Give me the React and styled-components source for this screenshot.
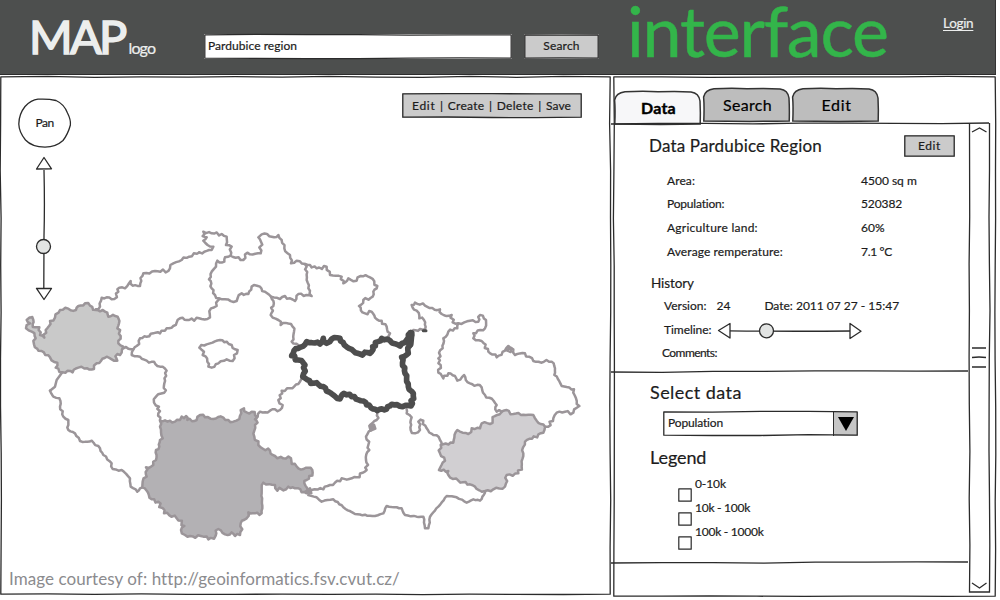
import React from 'react';
import styled, { createGlobalStyle } from 'styled-components';

const INK = '#2b2b2b';

const GlobalStyle = createGlobalStyle`
  * { box-sizing: border-box; }
  body { margin: 0; background: #fff; color: #1c1c1c; font-family: Lato, "Open Sans", sans-serif; }
`;

/* ---------- hand-drawn lines ---------- */

function noise(i, seed) {
  const v = Math.sin(i * 12.9898 + seed * 78.233) * 43758.5453;
  return (v - Math.floor(v)) * 2 - 1;
}

function handLine(x1, y1, x2, y2, seed, amp = 0.5) {
  const len = Math.hypot(x2 - x1, y2 - y1);
  const n = Math.max(1, Math.round(len / 48));
  const nx = -(y2 - y1) / len;
  const ny = (x2 - x1) / len;
  let d = '';
  for (let i = 1; i <= n; i += 1) {
    const t = i / n;
    const o = i === n ? 0 : noise(i, seed) * amp;
    d += `L${(x1 + (x2 - x1) * t + nx * o).toFixed(1)} ${(y1 + (y2 - y1) * t + ny * o).toFixed(1)}`;
  }
  return d;
}

function boxPath(w, h, seed, amp) {
  const a = 0.8;
  return `M${a} ${a}${handLine(a, a, w - a, a, seed, amp)}${handLine(w - a, a, w - a, h - a, seed + 1, amp)}${handLine(w - a, h - a, a, h - a, seed + 2, amp)}${handLine(a, h - a, a, a, seed + 3, amp)}Z`;
}

const Outline = styled.svg`
  position: absolute;
  inset: 0;
  overflow: visible;
  pointer-events: none;
  fill: none;
  stroke: ${INK};
  stroke-width: ${(p) => p.$weight || 1.3};
  stroke-linejoin: round;
`;

function Frame({ w, h, seed = 1, weight, amp }) {
  return (
    <Outline width={w} height={h} $weight={weight}>
      <path d={boxPath(w, h, seed, amp)} />
    </Outline>
  );
}

const Rule = styled.svg`
  display: block;
  flex: none;
  overflow: visible;
  margin-left: -2px;
  fill: none;
  stroke: ${INK};
  stroke-width: 1.3;
`;

/* ---------- text ---------- */

const Text = styled.span`
  font-size: ${(p) => p.$size || 12}px;
  letter-spacing: ${(p) => p.$track || 0}px;
  font-weight: ${(p) => (p.$bold ? 700 : 400)};
  line-height: 1.2;
  white-space: nowrap;
  -webkit-text-stroke: ${(p) => (p.$bold ? 0.4 : 0.2)}px currentColor;
`;

/* ---------- header ---------- */

const Page = styled.div`
  width: 1000px;
  height: 600px;
  display: flex;
  flex-direction: column;
  overflow: hidden;
`;

const Header = styled.header`
  width: 996px;
  height: 75px;
  flex: none;
  display: flex;
  align-items: flex-start;
  background: #4d4f4e;
  border-bottom: 1px solid #2c2c2c;
  border-right: 1px solid #333;
`;

const Logo = styled.div`
  width: 204px;
  padding: 7px 0 0 29px;
  display: flex;
  align-items: baseline;
  gap: 4px;
  color: #eceeed;
`;

const LogoMark = styled.span`
  font-size: 47px;
  line-height: 58px;
  letter-spacing: -2.7px;
  -webkit-text-stroke: 1.6px currentColor;
`;

const SearchField = styled.div`
  position: relative;
  width: 308px;
  height: 25px;
  margin: 34px 12px 0 0;
  padding: 0 0 1px 4px;
  display: flex;
  align-items: center;
  background: #fff;
`;

const Button = styled.button`
  position: relative;
  width: ${(p) => p.$w}px;
  height: ${(p) => p.$h}px;
  margin: ${(p) => p.$m || 0};
  padding: 0;
  border: 0;
  display: flex;
  align-items: center;
  justify-content: center;
  background: #cbcbcb;
  color: #1c1c1c;
  font-family: inherit;
`;

const Title = styled.h1`
  margin: 0 0 0 28px;
  width: 316px;
  font-size: 70px;
  font-weight: 400;
  line-height: 61px;
  letter-spacing: -1.2px;
  color: #33b54a;
  -webkit-text-stroke: 0.5px currentColor;
`;

const Login = styled.a`
  margin-top: 12px;
  color: #eceeed;
  text-decoration: underline;
  text-underline-offset: 2px;
`;

/* ---------- body ---------- */

const Body = styled.main`
  display: grid;
  grid-template-columns: 611px 383px;
  gap: 2px;
  margin-top: 1px;
`;

const MapPanel = styled.section`
  position: relative;
  height: 519px;
`;

const MapCanvas = styled.svg`
  display: block;
  fill: none;
  stroke: #9b9599;
  stroke-width: 7.5;
  stroke-linejoin: round;
  stroke-linecap: round;
`;

const PanButton = styled.div`
  position: absolute;
  left: 18px;
  top: 22px;
  width: 53px;
  height: 50px;
  padding-top: 1px;
  display: flex;
  align-items: center;
  justify-content: center;
`;

const ZoomSlider = styled.svg`
  position: absolute;
  left: 34px;
  top: 80px;
  fill: #fff;
  stroke: ${INK};
  stroke-width: 1.3;
  stroke-linejoin: round;
`;

const MapToolbar = styled.div`
  position: absolute;
  left: 402px;
  top: 17px;
  width: 180px;
  height: 25px;
  display: flex;
  align-items: center;
  justify-content: space-between;
  padding: 1px 11px 0 10px;
  background: #cbcbcb;
`;

const Credit = styled.p`
  position: absolute;
  left: 9px;
  top: 493px;
  margin: 0;
  font-size: 17px;
  line-height: 20px;
  letter-spacing: 0.07px;
  color: #8b8b8e;
`;

const SidePanel = styled.section`
  position: relative;
  height: 521px;
  display: flex;
  flex-direction: column;
`;

const Tabs = styled.nav`
  display: flex;
  gap: 2px;
  height: 47px;
  padding: 12px 0 0 1px;
`;

const TabBox = styled.div`
  position: relative;
  width: 87px;
  height: ${(p) => (p.$active ? 33 : 34)}px;
  margin-top: ${(p) => (p.$active ? 3 : 0)}px;
  padding: ${(p) => (p.$active ? 1 : 0)}px 0 0 2px;
  display: flex;
  align-items: center;
  justify-content: center;
`;

const TabShape = styled.svg`
  position: absolute;
  inset: 0;
  overflow: visible;
  fill: ${(p) => (p.$active ? '#f7f7f9' : '#bdbdbd')};
  stroke: #333;
  stroke-width: 1.5;
`;

const TabLabel = styled(Text)`
  position: relative;
  color: #000;
`;

function Tab({ active, size = 16, track, children }) {
  return (
    <TabBox $active={active}>
      <TabShape $active={active} width="87" height="34">
        <path d="M0.8 33 Q1.4 18 0.6 9 Q2 2 11 0.8 Q30 -0.4 44 0.8 Q62 0 77 0.9 Q85 2 86 10 Q86.6 22 86.2 33 Q50 33.8 0.8 33Z" />
      </TabShape>
      <TabLabel $size={size} $track={track} $bold={active}>{children}</TabLabel>
    </TabBox>
  );
}

const ScrollArea = styled.div`
  position: relative;
  display: flex;
  height: 471px;
`;

const Content = styled.div`
  width: 355px;
  display: flex;
  flex-direction: column;
`;

const DataSection = styled.section`
  height: 247px;
  padding: 0 13px 0 36px;
`;

const HeadRow = styled.div`
  display: flex;
  justify-content: space-between;
  align-items: center;
  height: 44px;
  margin-bottom: 1px;
`;

const Facts = styled.dl`
  margin: 0 0 8px 18px;
  display: grid;
  grid-template-columns: 194px 1fr;
  grid-auto-rows: 23.7px;
  align-items: center;
`;

const Term = styled(Text).attrs({ as: 'dt' })``;
const Value = styled(Text).attrs({ as: 'dd' })`
  margin: 0;
`;

const Row = styled.div`
  display: flex;
  align-items: center;
  height: ${(p) => p.$h}px;
  padding-left: ${(p) => p.$in || 0}px;
  gap: ${(p) => p.$gap || 0}px;
`;

const DateText = styled(Text)`
  margin-left: 24px;
`;

const Timeline = styled.svg`
  margin-top: 1px;
  fill: #fff;
  stroke: ${INK};
  stroke-width: 1.3;
  stroke-linejoin: round;
`;

const SelectSection = styled.section`
  height: 190px;
  padding: 9px 0 0 37px;
`;

const Select = styled.div`
  position: relative;
  display: flex;
  justify-content: space-between;
  align-items: center;
  width: 195px;
  height: 25px;
  margin: 6px 0 10px 13px;
  padding: 0 0 1px 5px;
`;

const SelectArrow = styled.svg`
  margin-top: 1px;
  background: #c6c6c6;
  border-left: 1.4px solid ${INK};
`;

const LegendList = styled.div`
  padding-top: 7px;
`;

const LegendRow = styled.label`
  display: flex;
  height: 24px;
  padding-left: 28px;
  gap: 3px;
`;

const Check = styled.span`
  position: relative;
  width: 14px;
  height: 14px;
  margin-top: 11px;
`;

const Scrollbar = styled.svg`
  display: block;
  fill: none;
  stroke: ${INK};
  stroke-width: 1.3;
  overflow: visible;
`;

/* ---------- map borders ---------- */

function border(src, seed = 1, amp = 4) {
  const pts = src.trim().split(/\s+/).map((s) => s.split(',').map(Number));
  let d = `M${pts[0]}`;
  for (let i = 1; i < pts.length; i += 1) {
    const [x1, y1] = pts[i - 1];
    const [x2, y2] = pts[i];
    const len = Math.hypot(x2 - x1, y2 - y1) || 1;
    const n = Math.max(1, Math.round(len / 8));
    for (let k = 1; k <= n; k += 1) {
      const t = k / n;
      const o = k === n ? 0 : noise(i * 7 + k, seed) * amp;
      const x = x1 + (x2 - x1) * t - ((y2 - y1) / len) * o;
      const y = y1 + (y2 - y1) * t + ((x2 - x1) / len) * o;
      d += `L${x.toFixed(1)},${y.toFixed(1)}`;
    }
  }
  return d;
}

const WEST_REGION = '88,293 100,300 98,312 107,322 118,322 120,345 133,353 137,330 150,303 165,293 180,270 205,266 228,270 235,258 255,250 270,257 288,270 300,274 322,278 325,290 353,290 357,310 352,325 362,348 355,370 370,380 365,398 352,402 352,422 320,410 290,430 282,447 262,445 235,443 218,457 203,452 187,457 167,443 172,428 150,412 125,393 102,373 107,355 95,335 78,325 80,315 90,310 80,300 88,293';
const WEST_LINES = [
  '288,268 300,260 305,233 320,232 343,237 355,215 358,203 375,205 392,183 398,197 420,198 430,160 465,153 505,153 520,130 545,120 598,97',
  '370,385 400,388 410,378 420,355 440,350 460,340 480,340 500,325 520,318 540,295 560,300 605,297 630,292 633,265 650,258 655,240 660,237',
  '400,388 395,405 420,410 440,422 462,425 480,440 500,452 493,490 493,518 468,530 462,548 477,560 475,580 480,600',
];
const SOUTH_WEST_LINE = '0,62 10,80 28,85 30,110 40,140 55,150 55,180 75,190 90,213 112,215 125,212 150,235 160,255 185,280 188,297 215,300 240,325 242,350 262,365 270,355 277,352';
const SOUTH_REGION = '330,152 360,152 375,155 390,150 395,140 408,138 412,150 440,150 450,135 465,142 490,147 520,143 550,155 568,147 572,120 582,115 590,127 605,125 622,140 615,165 613,200 625,225 640,237 660,242 675,258 700,265 723,265 725,282 745,295 782,293 788,308 770,330 763,340 780,365 770,370 735,355 715,350 682,362 675,345 640,338 635,370 635,430 615,430 595,427 590,445 572,460 570,495 555,498 545,487 525,493 505,477 497,497 475,508 460,500 405,495 393,480 403,468 380,445 342,430 325,395 305,388 290,362 277,352 278,335 290,320 288,292 310,285 318,270 318,240 328,230 330,210 338,205 330,170 330,152';
const NORTH_LINES = [
  '28,97 65,90 70,80 40,62 50,52 38,48 40,35 65,40 95,42 110,50 108,75 125,80 122,107 160,120 172,98 212,100 213,65 205,52 215,43 245,50 265,45 275,60 283,85 300,105 303,130 320,122 345,132 380,145 410,140 420,165 455,170 460,190 475,175 500,182 512,168 540,172 562,198 550,215 548,230 520,240 507,258 525,280 545,275 555,293 575,302 590,320 600,340 598,358',
  '122,107 105,112 103,125 82,122 78,140 65,155 57,178 65,205 75,225 88,235 105,238 140,243 155,220 175,222 192,195 210,200 225,215 243,230 270,237 285,228 315,243 325,222 365,228 355,205 350,180 350,140 345,132',
  '243,230 250,258 242,285 265,300 272,315 303,312 312,335 305,365 325,375',
  '335,475 325,492 300,505 275,512 265,540 278,555 270,570 240,572 210,575 203,590 195,598',
  '28,383 50,373 60,370 90,360 110,365 125,375 143,390 132,405 128,423 110,418 85,430 65,443 55,440 52,425 38,405 42,395 28,383',
];
const SELECTED_REGION = '325,385 350,365 390,372 400,355 410,370 425,357 450,355 463,375 485,388 510,402 540,400 548,380 575,355 600,362 630,378 650,360 662,338 655,400 635,412 645,460 655,500 670,520 663,558 605,553 590,567 562,572 530,555 520,543 485,530 462,520 450,537 430,525 400,500 380,488 362,490 338,470 345,435 325,420 305,407 312,392 325,385';
const SOUTH_LINES = [
  '412,100 410,120 390,135 395,150 378,170 385,195 388,210 378,240 380,270 350,292 305,295 270,315 250,328 215,330',
  '500,88 500,100 515,112 512,150 525,160 540,150 535,125 550,122 560,145 580,165 600,180 605,195',
];
const SOUTH_SMOOTH = '205,345 230,352 245,365 280,358 310,382 345,402 405,408 430,400 440,378 485,385 495,405 530,410 550,410 555,445 565,445 570,410 595,380 620,348 650,352 680,368 700,358 720,362 735,338';
const EAST_REGION = '212,465 250,458 262,420 295,432 305,415 330,415 335,400 360,402 375,378 400,362 430,372 490,375 500,392 525,410 520,428 465,455 460,490 455,530 445,550 410,555 405,590 370,598 345,603 320,597 300,583 265,572 235,555 235,543 207,540 225,512 210,490 212,465';
const EAST_LINES = [
  '130,120 150,117 165,118 162,90 148,85 140,62 125,45 135,38 165,47 210,58 215,72 245,75 248,97 265,100 300,92 325,95 330,75 348,90 345,115 310,130 310,145 335,153 355,185 380,202 405,182 415,168 430,178 435,195 465,190 490,213 545,215 555,235 553,255 575,288 612,298 618,325 628,348 610,368 560,368 550,385 535,410 525,410',
  '265,100 262,115 235,125 220,145 218,175 205,205 212,225 205,248 220,265 235,250 255,258 262,272 282,255 300,280 335,292 345,315 380,345 380,365 395,365',
];

function CzechMap() {
  return (
    <MapCanvas width="611" height="519" viewBox="0 76 611 519">
      <g transform="translate(0 220) scale(0.33333)">
        {WEST_LINES.map((l, i) => <path key={l} d={border(l, i + 3, 5)} />)}
        <path d="M187 457L170 480L165 500L150 512" />
        <path d={border(WEST_REGION, 4, 6)} fill="#c9c9c9" />
      </g>
      <g transform="translate(50 370) scale(0.33333)">
        <path d={border(SOUTH_WEST_LINE, 2, 3.5)} />
        <path d={border(SOUTH_REGION, 6, 6)} fill="#b3b1b4" />
      </g>
      <g transform="translate(240 380) scale(0.33333)">
        {SOUTH_LINES.map((l, i) => <path key={l} d={border(l, i + 8, 5.5)} />)}
        <path d={border(SOUTH_SMOOTH, 2, 2)} />
        <path d="M388 138L402 134L406 146L392 152Z M196 335L210 325L214 340Z" fill="#9b9599" />
      </g>
      <g transform="translate(370 290) scale(0.33333)">
        {EAST_LINES.map((l, i) => <path key={l} d={border(l, i + 5, 5)} />)}
        <path d={border(EAST_REGION, 9, 5)} fill="#d1cfd2" />
        <path d="M408 180L424 174L422 186Z" />
        <path d="M160 122L168 122" stroke="#4d4d4d" strokeWidth="9" />
      </g>
      <g transform="translate(190 220) scale(0.33333)">
        {NORTH_LINES.map((l, i) => <path key={l} d={border(l, i + 11, 5)} />)}
        <path d={border(SELECTED_REGION, 5, 4.5)} stroke="#4d4d4d" strokeWidth="17" />
        <path d="M663 340L660 372" stroke="#4d4d4d" strokeWidth="22" />
      </g>
    </MapCanvas>
  );
}

const LEGEND = [['0-10k', -0.1], ['10k - 100k', -0.25], ['100k - 1000k', -0.25]];
const FACTS = [
  ['Area:', 0.1, '4500 sq m', 0],
  ['Population:', -0.2, '520382', -0.1],
  ['Agriculture land:', 0.25, '60%', 0],
  ['Average remperature:', 0.1, '7.1 °C', -0.3],
];

export default function App() {
  return (
    <Page>
      <GlobalStyle />
      <Header>
        <Logo>
          <LogoMark>MAP</LogoMark>
          <Text $size={16} $track={-0.9}>logo</Text>
        </Logo>
        <SearchField>
          <Frame w={308} h={25} seed={2} />
          <Text $track={0.05}>Pardubice region</Text>
        </SearchField>
        <Button $w={75} $h={25} $m="34px 0 0">
          <Frame w={75} h={25} seed={4} />
          <Text $track={0.2}>Search</Text>
        </Button>
        <Title>interface</Title>
        <Login><Text $size={13.5} $track={-0.3}>Login</Text></Login>
      </Header>
      <Body>
        <MapPanel>
          <CzechMap />
          <Frame w={611} h={519} seed={7} amp={0.6} />
          <PanButton>
            <Outline width="53" height="50">
              <path d="M20 1.2 Q30 0.6 38 2.5 Q46 6 49.5 15 Q53 22 52.4 27 Q50 36 45 42.5 Q38 49 27 49.2 Q14 49 7.5 42 Q1 34 0.8 26 Q1 16 7 8.5 Q13 2 20 1.2Z" />
            </Outline>
            <Text $track={-0.5}>Pan</Text>
          </PanButton>
          <ZoomSlider width="20" height="146">
            <path d="M10 14 Q10.8 50 10 80 L9.8 134" fill="none" />
            <path d="M10 1.5L17.5 12.8L2.5 13Z M2.5 132.3L17.5 132.5L10 143.5Z" />
            <circle cx="9.5" cy="90.5" r="7" fill="#e2e4e3" />
          </ZoomSlider>
          <MapToolbar>
            <Frame w={180} h={25} seed={9} />
            <Text $track={0.7}>Edit</Text>
            <Text>|</Text>
            <Text $track={0.3}>Create</Text>
            <Text>|</Text>
            <Text $track={0.3}>Delete</Text>
            <Text>|</Text>
            <Text $track={0.1}>Save</Text>
          </MapToolbar>
          <Credit>Image courtesy of: http://geoinformatics.fsv.cvut.cz/</Credit>
        </MapPanel>
        <SidePanel>
          <Frame w={383} h={521} seed={14} amp={0.6} />
          <Tabs>
            <Tab active track={0.2}>Data</Tab>
            <Tab track={0.3}>Search</Tab>
            <Tab track={0.7}>Edit</Tab>
          </Tabs>
          <ScrollArea>
            <Content>
              <Rule width="378" height="1">
                <path d={`M0 1${handLine(0, 1, 378, 0, 5)}`} />
              </Rule>
              <DataSection>
                <HeadRow>
                  <Text $size={17} $track={0.18}>Data Pardubice Region</Text>
                  <Button $w={51} $h={22}>
                    <Frame w={51} h={22} seed={3} />
                    <Text $track={0.6}>Edit</Text>
                  </Button>
                </HeadRow>
                <Facts>
                  {FACTS.map(([name, t1, value, t2]) => (
                    <React.Fragment key={name}>
                      <Term $track={t1}>{name}</Term>
                      <Value $track={t2}>{value}</Value>
                    </React.Fragment>
                  ))}
                </Facts>
                <Row $h={23} $in={2}><Text $size={13.5} $track={-0.1}>History</Text></Row>
                <Row $h={22} $in={15} $gap={10}>
                  <Text>Version:</Text>
                  <Text>24</Text>
                  <DateText>Date: 2011 07 27 - 15:47</DateText>
                </Row>
                <Row $h={27} $in={15} $gap={6}>
                  <Text $track={-0.05}>Timeline:</Text>
                  <Timeline width="146" height="18">
                    <path d="M12 8.8 Q70 9.6 134 9" fill="none" />
                    <path d="M13 1.5L13 16L1.5 8.5Z M133 1.5L144 9.2L133 16.5Z" />
                    <circle cx="49.5" cy="8.8" r="7" fill="#e2e4e3" />
                  </Timeline>
                </Row>
                <Row $h={18} $in={13}><Text $track={-0.55}>Comments:</Text></Row>
              </DataSection>
              <Rule width="357" height="1">
                <path d={`M0 1${handLine(0, 1, 357, 0, 8)}`} />
              </Rule>
              <SelectSection>
                <Row $h={24}><Text $size={18} $track={0.45}>Select data</Text></Row>
                <Select>
                  <Text $track={-0.15}>Population</Text>
                  <SelectArrow width="25" height="24">
                    <path d="M4 5L20 5L12 19Z" fill="#000" />
                  </SelectArrow>
                  <Frame w={195} h={25} seed={6} />
                </Select>
                <Row $h={24}><Text $size={18} $track={-0.1}>Legend</Text></Row>
                <LegendList>
                  {LEGEND.map(([name, t], i) => (
                    <LegendRow key={name}>
                      <Check><Frame w={14} h={14} seed={20 + i} weight={1.2} /></Check>
                      <Text $track={t}>{name}</Text>
                    </LegendRow>
                  ))}
                </LegendList>
              </SelectSection>
              <Rule width="357" height="1">
                <path d={`M0 1${handLine(0, 1, 357, 0, 12)}`} />
              </Rule>
            </Content>
            <Scrollbar width="22" height="470">
              <path d={`M1.5 0${handLine(1.5, 0, 1.5, 469, 3)}${handLine(1.5, 469, 21.5, 469, 2)}${handLine(21.5, 469, 21.5, 0, 4)}`} />
              <path d="M4 9L11.5 5L18.5 9 M4 460L11.5 465L18.5 460 M4 225L18 225 M4 234.5Q11 233.5 18 234.5 M4 244L18 244" />
            </Scrollbar>
          </ScrollArea>
        </SidePanel>
      </Body>
    </Page>
  );
}
